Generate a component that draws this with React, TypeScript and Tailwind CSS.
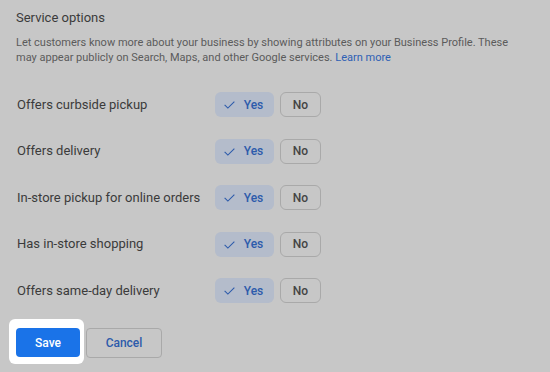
import React from "react";

const rows = [
  "Offers curbside pickup",
  "Offers delivery",
  "In-store pickup for online orders",
  "Has in-store shopping",
  "Offers same-day delivery",
];

export default function App() {
  return (
    <div
      className="w-[550px] h-[372px] bg-[#c7c7c7] overflow-hidden"
      style={{ fontFamily: "Roboto, 'Liberation Sans', sans-serif" }}
    >
      <div className="px-4 pt-[9px]">
        <div className="text-[13px] leading-[18px] text-[#3b3b3b]">Service options</div>
        <p className="mt-[8px] text-[11px] leading-[15px] text-[#5b5b5b] whitespace-nowrap">
          Let customers know more about your business by showing attributes on your Business Profile. These
          <br />
          may appear publicly on Search, Maps, and other Google services.{" "}
          <span className="text-[#2e60b5]">Learn more</span>
        </p>
        <div className="mt-[27px] flex flex-col gap-[21.5px]">
          {rows.map((r) => (
            <div key={r} className="flex items-center h-[25px]">
              <div className="w-[199px] pl-px text-[13px] text-[#3b3b3b]">{r}</div>
              <div className="flex gap-[6px]">
                <div className="w-[59px] h-[25px] rounded-[6px] bg-[#b4bccb] flex items-center justify-center gap-[8px] text-[12px] font-medium text-[#2d5bab]">
                  <svg width="13" height="13" viewBox="0 0 24 24" fill="none" stroke="#2d5bab" strokeWidth="2">
                    <path d="M3 12.5l6 6L21 6.5" />
                  </svg>
                  <span className="pr-[3px]">Yes</span>
                </div>
                <div className="w-[41px] h-[25px] rounded-[6px] border border-[#a9a9a9] flex items-center justify-center text-[12px] font-medium text-[#444]">
                  No
                </div>
              </div>
            </div>
          ))}
        </div>
        <div className="mt-[16px] flex items-center">
          <div className="-ml-[7px] pl-[7px] pr-[4px] pt-[9px] pb-[7px] bg-white rounded-[6px]">
            <button className="w-[64px] h-[29px] rounded-[4px] bg-[#1a73e8] text-white text-[12px] font-medium flex items-center justify-center">
              Save
            </button>
          </div>
          <button className="ml-[2px] mt-[2px] w-[76px] h-[30px] rounded-[4px] border border-[#a9a9a9] text-[#2d5bab] text-[12px] font-medium flex items-center justify-center">
            Cancel
          </button>
        </div>
      </div>
    </div>
  );
}
